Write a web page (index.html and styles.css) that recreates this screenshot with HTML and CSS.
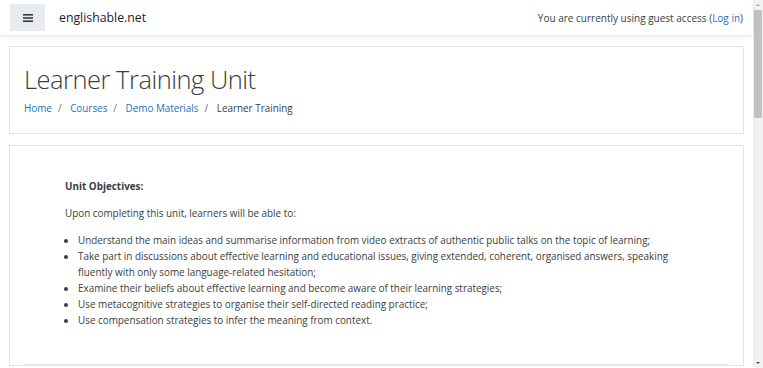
FILE: index.html
```html
<!DOCTYPE html>
<html lang="en">
<head>
<meta charset="utf-8">
<title>Learner Training Unit</title>
<link rel="stylesheet" href="styles.css">
</head>
<body>
<div class="page">
  <header class="navbar">
    <button class="menu-btn" aria-label="Menu">
      <svg width="10" height="8" viewBox="0 0 10 8"><rect x="0" y="0" width="10" height="1.6" fill="#373a3c"/><rect x="0" y="3.2" width="10" height="1.6" fill="#373a3c"/><rect x="0" y="6.4" width="10" height="1.6" fill="#373a3c"/></svg>
    </button>
    <span class="brand">englishable.net</span>
    <span class="login-info">You are currently using guest access (<a href="#">Log in</a>)</span>
  </header>
  <main class="content">
    <section class="card page-header">
      <h1 class="title">Learner Training Unit</h1>
      <nav class="breadcrumb">
        <a href="#">Home</a><span class="sep">/</span>
        <a href="#">Courses</a><span class="sep">/</span>
        <a href="#">Demo Materials</a><span class="sep">/</span>
        <span class="current">Learner Training</span>
      </nav>
    </section>
    <section class="card main-card">
      <div class="summary">
        <p class="heading">Unit Objectives:</p>
        <p class="intro">Upon completing this unit, learners will be able to:</p>
        <ul class="objectives">
          <li>Understand the main ideas and summarise information from video extracts of authentic public talks on the topic of learning;</li>
          <li>Take part in discussions about effective learning and educational issues, giving extended, coherent, organised answers, speaking fluently with only some language-related hesitation;</li>
          <li>Examine their beliefs about effective learning and become aware of their learning strategies;</li>
          <li>Use metacognitive strategies to organise their self-directed reading practice;</li>
          <li>Use compensation strategies to infer the meaning from context.</li>
        </ul>
      </div>
      <hr class="divider">
    </section>
  </main>
</div>
<div class="scrollbar">
  <div class="arrow up"></div>
  <div class="thumb"></div>
  <div class="track"></div>
  <div class="arrow down"></div>
</div>
</body>
</html>
```

FILE: styles.css
```css
html, body {
  margin: 0;
  padding: 0;
  height: 100%;
  overflow: hidden;
}
body {
  display: flex;
  background: #fff;
  font-family: "Open Sans", "Liberation Sans", sans-serif;
  font-size: 9.9px;
  color: #3a3d40;
}
.page {
  flex: 1;
  min-width: 0;
}
.navbar {
  height: 35px;
  display: flex;
  align-items: center;
  padding: 0 10px;
  box-shadow: 0 2px 4px rgba(0,0,0,0.08);
  position: relative;
}
.menu-btn {
  width: 35px;
  height: 27px;
  border: 0;
  background: #e9ecef;
  display: flex;
  align-items: center;
  justify-content: center;
  padding: 0;
  margin-right: 14px;
}
.brand {
  font-size: 12.3px;
  color: #1d2125;
}
.login-info {
  margin-left: auto;
  font-size: 10px;
}
a {
  color: #1a73c0;
  text-decoration: none;
}
.content {
  padding: 11px 9px 0 9px;
  display: flex;
  flex-direction: column;
  gap: 11px;
}
.card {
  border: 1px solid #e3e3e3;
  background: #fff;
}
.page-header {
  padding: 16px 14px 17px 14px;
}
.title {
  margin: 0;
  font-size: 25.5px;
  letter-spacing: -0.5px;
  font-weight: 300;
  line-height: 32px;
}
.breadcrumb {
  margin-top: 5px;
  font-size: 9.9px;
  line-height: 16px;
}
.sep {
  color: #6a737b;
  padding: 0 6px;
}
.main-card {
  padding: 32px 15px 0 15px;
}
.summary {
  padding: 0 40px;
}
.summary p {
  margin: 0 0 11px 0;
  line-height: 16px;
}
.heading {
  font-weight: 700;
}
.objectives {
  margin: 0;
  padding-left: 13px;
  line-height: 16px;
}
.divider {
  margin: 36px 0 0 0;
  border: 0;
  border-top: 1px solid #e6e6e6;
}
.scrollbar {
  width: 10px;
  height: 100%;
  background: #f1f1f1;
  display: flex;
  flex-direction: column;
}
.arrow {
  height: 10px;
  position: relative;
}
.arrow.up::after {
  content: "";
  position: absolute;
  left: 3px;
  top: 4px;
  border-left: 2px solid transparent;
  border-right: 2px solid transparent;
  border-bottom: 2px solid #a3a3a3;
}
.arrow.down::after {
  content: "";
  position: absolute;
  left: 3px;
  top: 4px;
  border-left: 2px solid transparent;
  border-right: 2px solid transparent;
  border-top: 2px solid #505050;
}
.thumb {
  height: 108px;
  margin: 0 1px;
  background: #c1c1c1;
}
.track {
  flex: 1;
}
```
